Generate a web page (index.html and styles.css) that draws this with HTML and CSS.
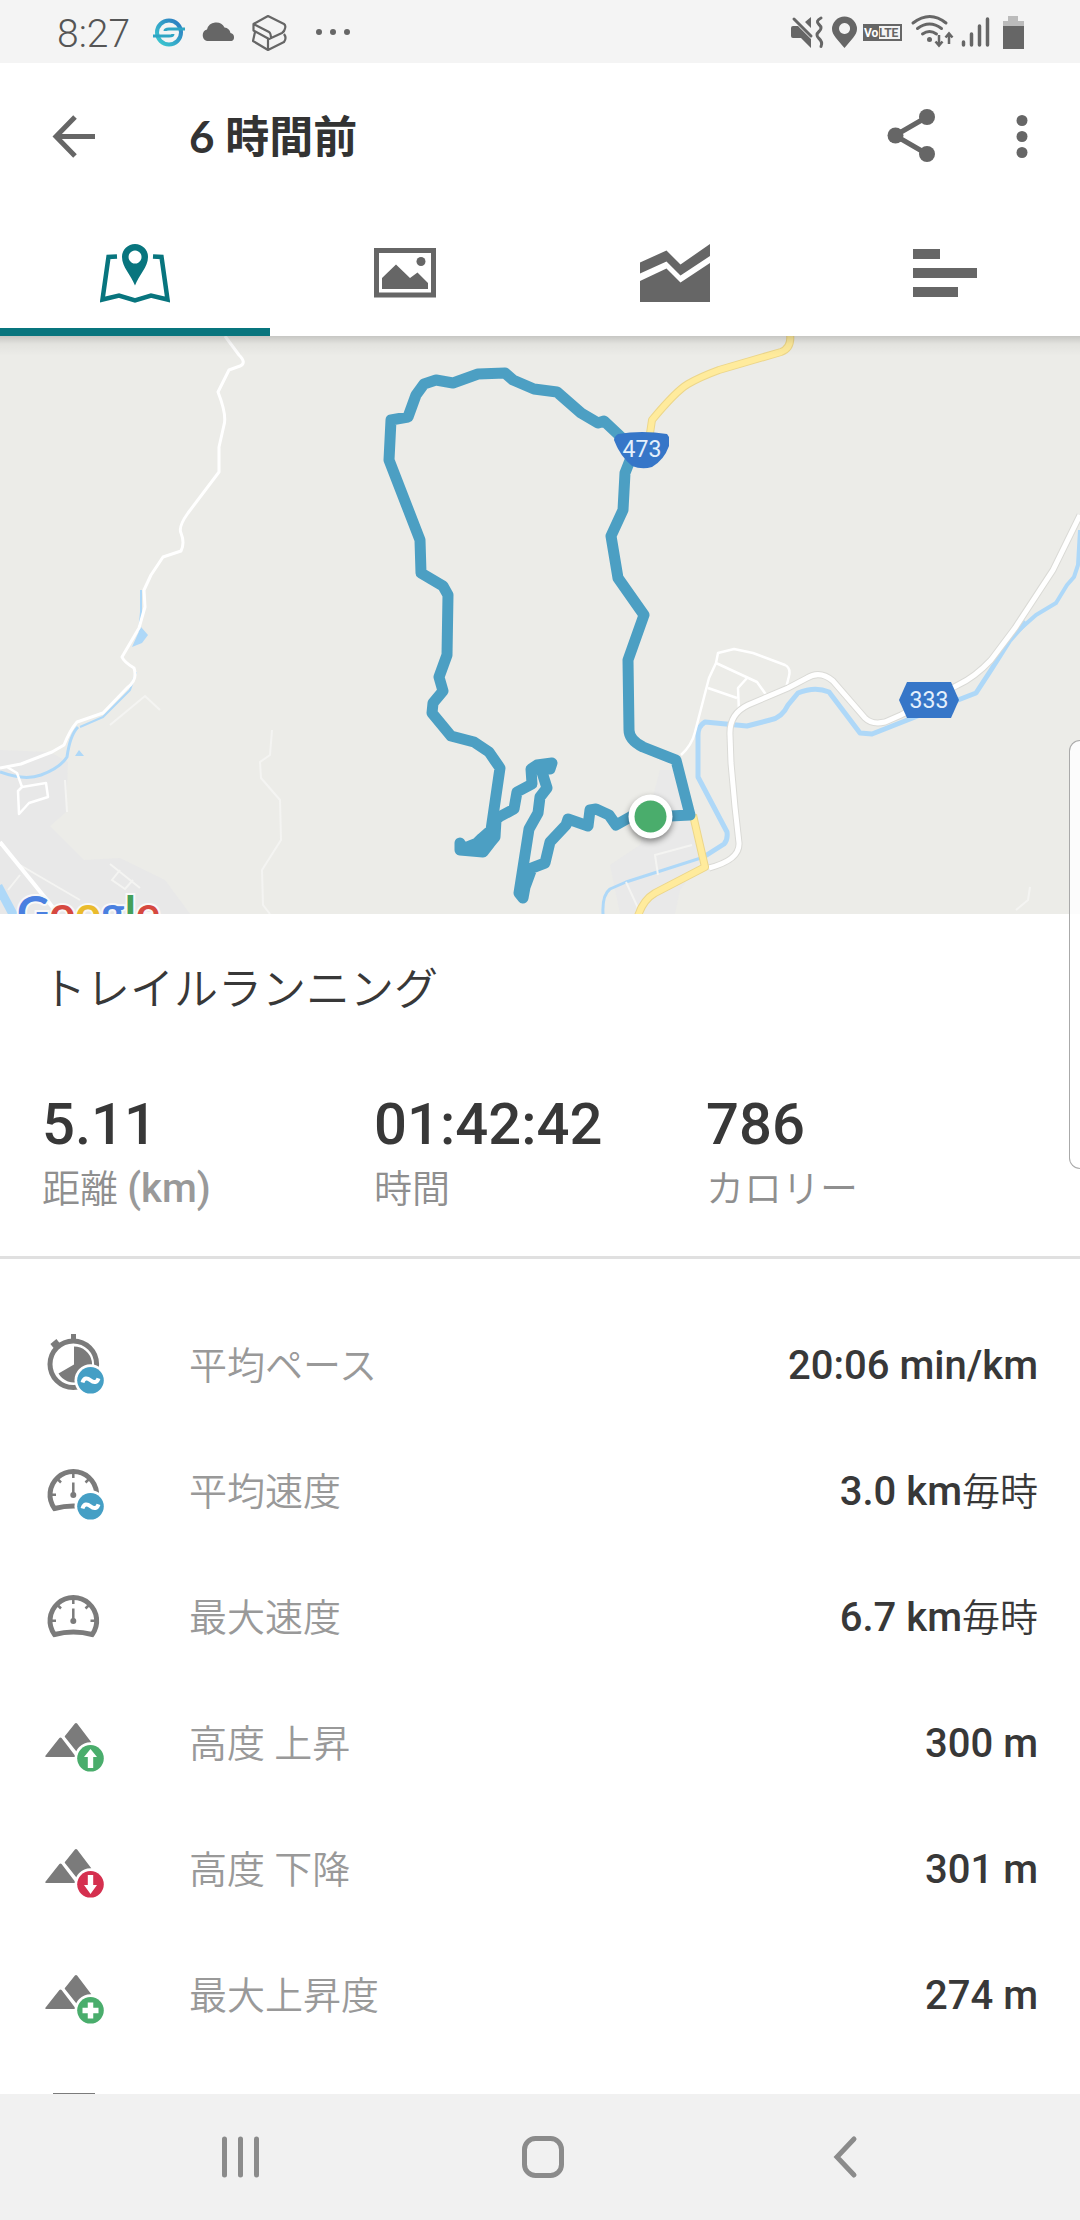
FILE: index.html
```
<!DOCTYPE html>
<html lang="ja">

<head>
    <meta charset="UTF-8">
    <meta name="viewport" content="width=device-width, initial-scale=1">
    <title>トレイルランニング</title>
    <link rel="stylesheet" href="styles.css">
</head>

<body>

    <!-- shared icons -->
    <svg class="sprite" width="0" height="0" aria-hidden="true">
        <symbol id="gauge" viewBox="42 -40 64 80">
            <path d="M54.500 16.500A23.300 23.300 0 1 1 92.200 16.500Q73.300 11.500 54.500 16.500Z" fill="none" stroke="#7b7b7b" stroke-width="5" />
            <path d="M73.300-19v5M51 2.800h5M90.500 2.800h5M57.500-13l3.500 3.500M89-13l-3.500 3.500M73.300-9.500v12" fill="none" stroke="#7b7b7b" stroke-width="2.500" />
            <circle cx="73.300" cy="3" r="3" fill="#7b7b7b" />
        </symbol>
        <symbol id="average" viewBox="42 -40 64 80">
            <circle cx="90.500" cy="14.300" r="16" fill="#fff" />
            <circle cx="90.500" cy="14.300" r="13.300" fill="#459fc5" />
            <path d="M82.500 16.500c1.500-5 4.500-5 8-2.200s6.500 2.400 8-2" fill="none" stroke="#fff" stroke-width="4" />
        </symbol>
        <symbol id="mountain" viewBox="42 -40 64 80">
            <path d="M46 12.300L60-5.500q.5-.6 1 0L74.500 12.300Z M65.500-7.500L75.500-20q.5-.6 1 0L90.500-1.500L79 9.500Z" fill="#7b7b7b" stroke="#7b7b7b" stroke-width="1.500" stroke-linejoin="round" />
            <circle cx="90.500" cy="14.300" r="16" fill="#fff" />
        </symbol>
    </svg>

    <div class="status-bar">
        <span class="clock">8:27</span>
        <svg class="status-left" viewBox="150 0 202 63" width="202" height="63" aria-hidden="true">
            <defs>
                <linearGradient id="syncColor" x1="0" y1="1" x2="1" y2="0">
                    <stop offset="0" stop-color="#3ccbd0" />
                    <stop offset="1" stop-color="#2b78c0" />
                </linearGradient>
            </defs>
            <circle cx="168" cy="32.500" r="12" fill="none" stroke="url(#syncColor)" stroke-width="4" />
            <path d="M184 29h-16q-4 0-4 2M152 36h16q4 0 4-2" fill="none" stroke="#2fa5c4" stroke-width="3" />
            <path d="M206 41a6 6 0 0 1 0-11.500a9.500 9.500 0 0 1 17.500-2a7 7 0 0 1 6 5.500a4.200 4.200 0 0 1 1 8Z" fill="#666" />
            <path d="M252.500 24L267 16L283 24q2 1.500 1 4.500q-.5 3-3 4.500L268 39L252.500 30.500ZM252.500 24L268 32q2 1 2 7M254 32l-2 9L267 50L283 42q3-4 0-8M267 39V50" fill="none" stroke="#666" stroke-width="2.200" stroke-linejoin="round" />
            <circle cx="318" cy="32" r="3" fill="#666" />
            <circle cx="332" cy="32" r="3" fill="#666" />
            <circle cx="346" cy="32" r="3" fill="#666" />
        </svg>
        <svg class="status-right" viewBox="788 0 236 63" width="236" height="63" aria-hidden="true">
            <g fill="#666">
                <path d="M792 26h5l13 13v9L800 38h-8q-2 0-2-2v-8q0-2 2-2ZM804 22l6-5v11Z" />
                <path d="M793 19l17 17M820 18q-6 3-2 6.500t0 7t0 7t2 8" fill="none" stroke="#666" stroke-width="3" stroke-linecap="round" />
                <path fill-rule="evenodd" d="M843.500 48C837 40 831 35 831 29a12.500 12.500 0 0 1 25 0C856 35 850 40 843.500 48ZM843.500 23a5.500 5.500 0 1 0 .1 0Z" />
                <path d="M862 24h39v17h-39ZM878 26v13h21V26Z" fill-rule="evenodd" />
                <text class="volte" x="863" y="37" fill="#fff">Vo</text>
                <text class="volte" x="878" y="37">LTE</text>
                <path d="M912 23q17-13 33 0M916.500 28.500q12-9 24 0M921.500 34q7-5 14 0" fill="none" stroke="#666" stroke-width="3" stroke-linecap="round" />
                <circle cx="928.500" cy="39.500" r="2.500" />
                <path d="M938 35v10M934.500 41.500l3.500 4l3.500-4M948 44V34M944.500 37.500l3.500-4l3.500 4" fill="none" stroke="#666" stroke-width="2.500" />
                <path d="M962.500 42v3M970.500 34v11M978.500 26v19M986.500 19v26" fill="none" stroke="#666" stroke-width="3.500" stroke-linecap="round" />
                <path d="M1002 21h5v-5h10v5h6v6h-21Z" fill="#bbb" />
                <path d="M1002 26h21v23h-21Z" />
            </g>
        </svg>
    </div>

    <header class="app-header">
        <button class="icon-button" type="button" aria-label="戻る">
            <svg viewBox="50 112 48 48" width="48" height="48">
                <path d="M75 117L56 136.500L75 156M57 136.500H95" fill="none" stroke="#666" stroke-width="5" />
            </svg>
        </button>
        <h1>6 時間前</h1>
        <button class="icon-button share" type="button" aria-label="共有">
            <svg viewBox="886 106 52 60" width="52" height="60">
                <path d="M927 117L895 135.500L927 154" fill="none" stroke="#666" stroke-width="5" />
                <circle cx="927" cy="117" r="8" fill="#666" />
                <circle cx="895.500" cy="135.500" r="8" fill="#666" />
                <circle cx="927" cy="154" r="8" fill="#666" />
            </svg>
        </button>
        <button class="icon-button" type="button" aria-label="メニュー">
            <svg viewBox="1014 112 16 48" width="16" height="48">
                <circle cx="1022" cy="120.500" r="5.500" fill="#666" />
                <circle cx="1022" cy="136.500" r="5.500" fill="#666" />
                <circle cx="1022" cy="152.500" r="5.500" fill="#666" />
            </svg>
        </button>
    </header>

    <nav class="tabs">
        <a href="#map" class="active" aria-label="マップ">
            <svg viewBox="100 242 70 62" width="70" height="62">
                <path d="M117 256.500l-8.500.5L102.500 299.500L119 295.500L135 300.500L151 295.500L167.500 299.500L161.500 257l-8.500-.5" fill="none" stroke="#08757e" stroke-width="4.500" />
                <path fill-rule="evenodd" d="M135 285.500C131 275 122 267 122 257a13 13 0 0 1 26 0C148 267 139 275 135 285.500ZM135 250.500a6.500 6.500 0 1 0 .1 0Z" fill="#08757e" />
            </svg>
        </a>
        <a href="#photos" aria-label="写真">
            <svg viewBox="374 242 62 62" width="62" height="62">
                <path d="M376.500 250.500h57v44.500h-57Z" fill="none" stroke="#666" stroke-width="5" />
                <path d="M382 289V278L396 264.500L410 278L417.500 272.500L428 283v6Z" fill="#666" />
                <circle cx="421" cy="261.500" r="4.500" fill="#666" />
            </svg>
        </a>
        <a href="#charts" aria-label="グラフ">
            <svg viewBox="640 242 70 62" width="70" height="62">
                <path d="M640 262.500L666.500 250.500L680.500 264.500L710 244V256L680.500 275.500L666.500 261.500L640 273.500ZM640 281L666.500 268.500L680.500 282.500L710 263V302H640Z" fill="#666" />
            </svg>
        </a>
        <a href="#details" aria-label="詳細">
            <svg viewBox="913 242 64 62" width="64" height="62">
                <path d="M913 249h27v10h-27ZM913 268h64v10h-64ZM913 287h45v10h-45Z" fill="#666" />
            </svg>
        </a>
    </nav>

    <main>
        <div class="map" id="map">
            <svg viewBox="0 336 1080 578" role="img" aria-label="ルートマップ">
                <defs>
                    <linearGradient id="topShade" x1="0" y1="0" x2="0" y2="1">
                        <stop offset="0" stop-color="#000" stop-opacity=".16" />
                        <stop offset=".4" stop-color="#000" stop-opacity=".04" />
                        <stop offset="1" stop-color="#000" stop-opacity="0" />
                    </linearGradient>
                </defs>
                <rect y="336" width="1080" height="578" fill="#ecece8" />

                <!-- built-up areas -->
                <path d="M0 750L50 752L68 762L66 812L50 826L84 860L120 858L165 880L190 914H0Z" fill="#e8e8e8" />
                <path d="M610 865L640 845L660 770L675 770L690 820L700 862L680 890L675 914H620Z" fill="#e9e9e9" />

                <!-- water -->
                <g fill="none" stroke="#aed8f8" stroke-linejoin="round">
                    <path d="M1080 530L1078 565L1074 577L1067 585L1056 603L1036 615L1019 630" stroke-width="4" />
                    <path d="M1026 622L1010 640L991 670L976 693L958 700L872 734L860 733L829 692Q815 686 798 693L788 705Q782 718 770 720L747 726L705 722Q698 726 698 735V777L727 832Q728 840 724 844L702 858" stroke-width="5" />
                    <path d="M704 857L626 882L610 889Q602 895 603 914" stroke-width="3" />
                    <path d="M78 727Q70 735 67 757Q60 768 41 775Q25 781 0 772" stroke-width="3" />
                    <path d="M141 590V612L139 632M136 672L130 690L103 717L80 727" stroke-width="2" />
                    <path d="M-2 886L14 916" stroke-width="9" />
                </g>
                <path d="M141 627L148 635L142 643L132 647ZM79 750L84 756L75 756Z" fill="#aed8f8" />

                <!-- minor roads -->
                <g fill="none" stroke="#f4f4f2" stroke-width="2">
                    <path d="M272 730L270 755L260 762L261 778L280 800L281 840L262 870L263 905L270 914M110 725L145 696L160 710M65 780L67 812M8 890L20 875M20 865L80 900M692 845L655 855L658 875M626 882L638 908M1030 887L1028 900L1016 910" />
                    <path d="M110 864L140 888M120 870L112 880L125 889L133 880" />
                </g>
                <g fill="none" stroke="#fff" stroke-width="2.500" stroke-linejoin="round">
                    <path d="M681 755Q692 745 695 732L709 678L716 663L718 653L734 649L753 653L785 665Q791 668 789 676L786 688M716 663L757 682L767 696M747 678L738 688L739 712M708 688L737 698" />
                    <path d="M7 767L17 773L22 787L46 783L48 797L29 803L19 814L18 791L22 787" />
                    <path d="M225 336L239 355Q247 363 240 366L229 370L218 392Q227 415 224 425L219 447V472L188 513Q178 527 181 533Q185 543 181 551L163 557L151 575L144 590L145 607L139 628L122 657Q124 662 134 668Q138 680 127 688L103 713L77 722Q70 730 64 745L52 752L21 764L0 768" stroke-width="3" />
                </g>
                <path d="M0 842L55 910" fill="none" stroke="#fff" stroke-width="4" />

                <!-- route 333 -->
                <path d="M1080 515L1053 570L1015 628L991 660Q975 677 958 685L901 715L885 722Q872 725 865 718L833 681Q820 670 807 678L788 688L748 705Q729 714 730 735L731 763L735 807L739 843Q740 860 709 868" fill="none" stroke="#dadad6" stroke-width="7" />
                <path d="M1080 515L1053 570L1015 628L991 660Q975 677 958 685L901 715L885 722Q872 725 865 718L833 681Q820 670 807 678L788 688L748 705Q729 714 730 735L731 763L735 807L739 843Q740 860 709 868" fill="none" stroke="#fff" stroke-width="5" />

                <!-- route 473 -->
                <g fill="none" stroke-linejoin="round">
                    <path d="M790 334Q792 348 781 352L719 370Q700 377 688 384Q676 391 652 420L649 440M693 815L705 867L655 893Q643 900 638 916" stroke="#ecd68a" stroke-width="8" />
                    <path d="M790 334Q792 348 781 352L719 370Q700 377 688 384Q676 391 652 420L649 440M693 815L705 867L655 893Q643 900 638 916" stroke="#ffeb9c" stroke-width="6" />
                </g>

                <!-- recorded track -->
                <path d="M650 817L690 815L676 760L643 747Q629 740 629 730L628 660L644 615L618 578L611 536L623 510L625 473L636 445L621 437L604 421L598 423L581 413L557 392L534 389L513 380L505 373L478 374L453 383L436 380L424 384L416 395L408 417L391 420L389 460L420 540L421 573L443 586L448 595L447 655L439 677L443 691L433 703L432 713L451 736L474 742L489 752L500 768L491 830L482 838L477 843L467 847L462 848L460 843L460 850L483 852L490 843L495 837L496 820L499 817L514 809L517 792L532 784L531 769L537 765L552 763L550 769L541 769L547 788L540 797L538 813L529 829L519 893L523 898L525 887L532 868L545 863L550 842L566 825L568 819L588 826L590 810L596 809L609 815L616 825L632 816" fill="none" stroke="#4c9fc3" stroke-width="11" stroke-linejoin="round" stroke-linecap="round" />

                <path d="M618 434Q642 430 667 434L669 437V446Q664 460 652 467Q642 470 632 466Q620 456 614 440Q614 437 618 434Z" fill="#3676c8" />
                <text class="road-number" x="642" y="457">473</text>
                <path d="M899 700L907 682H951L959 700L951 718H907Z" fill="#3676c8" />
                <text class="road-number" x="929" y="708">333</text>

                <circle class="start-pin" cx="650.500" cy="816.500" r="22" fill="#fff" />
                <circle cx="650.500" cy="816.500" r="16" fill="#4aad6c" />

                <text class="map-brand" x="17" y="929"><tspan fill="#4a80e0">G</tspan><tspan fill="#d6483f">o</tspan><tspan fill="#eabb2c">o</tspan><tspan fill="#4a80e0">g</tspan><tspan fill="#43a05a">l</tspan><tspan fill="#d6483f">e</tspan></text>
                <rect y="336" width="1080" height="20" fill="url(#topShade)" />
            </svg>
        </div>

        <section class="summary">
            <h2>トレイルランニング</h2>
            <div class="stats">
                <div class="stat">
                    <strong>5.11</strong>
                    <span>距離 <b class="unit">(km)</b></span>
                </div>
                <div class="stat">
                    <strong>01:42:42</strong>
                    <span>時間</span>
                </div>
                <div class="stat">
                    <strong>786</strong>
                    <span>カロリー</span>
                </div>
            </div>
        </section>

        <ul class="details" id="details">
            <li>
                <svg viewBox="42 -40 64 80">
                    <circle cx="73.300" cy="-1.700" r="23.300" fill="none" stroke="#7b7b7b" stroke-width="5" />
                    <path d="M73.500-32v7M52-20l6-5" stroke="#7b7b7b" stroke-width="5" />
                    <path d="M74-1.500V-19.500A18 18 0 1 1 58.500 7.500Z" fill="#7b7b7b" />
                    <use href="#average" x="42" y="-40" width="64" height="80" />
                </svg>
                <span class="label">平均ペース</span>
                <span class="value">20:06 min/km</span>
            </li>
            <li>
                <svg viewBox="42 -40 64 80">
                    <use href="#gauge" x="42" y="-40" width="64" height="80" />
                    <use href="#average" x="42" y="-40" width="64" height="80" />
                </svg>
                <span class="label">平均速度</span>
                <span class="value">3.0 km<span class="per-hour">毎時</span></span>
            </li>
            <li>
                <svg viewBox="42 -40 64 80">
                    <use href="#gauge" x="42" y="-40" width="64" height="80" />
                </svg>
                <span class="label">最大速度</span>
                <span class="value">6.7 km<span class="per-hour">毎時</span></span>
            </li>
            <li>
                <svg viewBox="42 -40 64 80">
                    <use href="#mountain" x="42" y="-40" width="64" height="80" />
                    <circle cx="90.500" cy="14.300" r="13.300" fill="#4aad6c" />
                    <path d="M90.500 5L97 13H93.200V24H87.800V13H84Z" fill="#fff" />
                </svg>
                <span class="label">高度 上昇</span>
                <span class="value">300 m</span>
            </li>
            <li>
                <svg viewBox="42 -40 64 80">
                    <use href="#mountain" x="42" y="-40" width="64" height="80" />
                    <circle cx="90.500" cy="14.300" r="13.300" fill="#d5304f" />
                    <path d="M90.500 24L97 15H93.200V5H87.800V15H84Z" fill="#fff" />
                </svg>
                <span class="label">高度 下降</span>
                <span class="value">301 m</span>
            </li>
            <li>
                <svg viewBox="42 -40 64 80">
                    <use href="#mountain" x="42" y="-40" width="64" height="80" />
                    <circle cx="90.500" cy="14.300" r="13.300" fill="#4aad6c" />
                    <path d="M90.500 6.500V22.500M82.500 14.500H98.500" stroke="#fff" stroke-width="5.500" />
                </svg>
                <span class="label">最大上昇度</span>
                <span class="value">274 m</span>
            </li>
            <li>
                <svg viewBox="42 -40 64 80">
                    <path d="M53-29H95V20H53Z" fill="#7b7b7b" />
                </svg>
            </li>
        </ul>
    </main>

    <div class="edge-handle"></div>

    <footer class="system-nav">
        <button type="button" aria-label="履歴">
            <svg viewBox="0 0 42 44" width="42" height="44">
                <path d="M4.500 4v36M20.500 4v36M36.500 4v36" stroke="#8b8b8b" stroke-width="5" stroke-linecap="round" />
            </svg>
        </button>
        <button type="button" aria-label="ホーム">
            <svg viewBox="0 0 44 44" width="44" height="44">
                <rect x="3.500" y="3.500" width="37" height="37" rx="11" fill="none" stroke="#8b8b8b" stroke-width="5" />
            </svg>
        </button>
        <button type="button" aria-label="戻る">
            <svg viewBox="0 0 26 44" width="26" height="44">
                <path d="M22 4L5 22L22 40" fill="none" stroke="#8b8b8b" stroke-width="5" stroke-linecap="round" />
            </svg>
        </button>
    </footer>

</body>

</html>
```
FILE: styles.css
```
* {
    box-sizing: border-box;
}

body {
    display: flex;
    flex-direction: column;
    position: relative;
    height: 100vh;
    margin: 0;
    overflow: hidden;
    background: #fff;
    color: #383838;
    font-family: Roboto, "Noto Sans CJK JP", sans-serif;
}

svg {
    display: block;
}

.sprite {
    position: absolute;
}

button {
    padding: 0;
    border: none;
    background: none;
    cursor: pointer;
}

/* status bar */
.status-bar {
    display: flex;
    align-items: center;
    flex: none;
    height: 63px;
    padding: 0 55px 0 57px;
    background: #f4f4f4;
}

.clock {
    width: 94px;
    padding-top: 4px;
    font-size: 39px;
    font-weight: 350;
    line-height: 44px;
    color: #555;
}

.status-right {
    margin-left: auto;
}

.volte {
    font-size: 12px;
    font-weight: 700;
}

/* header */
.app-header {
    display: flex;
    align-items: center;
    flex: none;
    height: 146px;
    padding: 0 50px;
}

.app-header h1 {
    flex: 1;
    margin: 0 0 0 91px;
    font-family: Lato, "Noto Sans CJK JP", sans-serif;
    font-size: 44px;
    font-weight: 700;
    line-height: 60px;
    color: #333;
}

.share {
    margin-right: 76px;
}

/* tabs */
.tabs {
    display: grid;
    grid-template-columns: repeat(4, 1fr);
    flex: none;
    height: 127px;
}

.tabs a {
    display: flex;
    align-items: center;
    justify-content: center;
    border-top: 8px solid transparent;
    border-bottom: 8px solid transparent;
}

.tabs a.active {
    border-bottom-color: #08757e;
}

main {
    flex: 1;
    min-height: 0;
    overflow: hidden;
}

/* map */
.map svg {
    width: 100%;
    height: auto;
}

.road-number {
    font-size: 23px;
    text-anchor: middle;
    fill: #e4f0fc;
}

.start-pin {
    filter: drop-shadow(0 3px 3px rgba(0, 0, 0, 0.45));
}

.map-brand {
    font-family: Lato, sans-serif;
    font-size: 45px;
    font-weight: 700;
    stroke: #f8f8f8;
    stroke-width: 4px;
    paint-order: stroke;
}

/* activity summary */
.summary {
    padding: 46px 42px 40px;
    border-bottom: 3px solid #e0e0e0;
}

.summary h2 {
    margin: 0 0 66px;
    font-size: 44px;
    font-weight: 350;
    line-height: 60px;
}

.stats {
    display: grid;
    grid-template-columns: repeat(3, 1fr);
}

.stat strong,
.stat span {
    display: block;
}

.stat strong {
    font-size: 58px;
    font-weight: 500;
    line-height: 76px;
}

.stat span {
    font-size: 38px;
    font-weight: 350;
    line-height: 54px;
    color: #8f8f8f;
}

.stat .unit {
    font-size: 40px;
    font-weight: 500;
    color: #999;
}

/* detail rows */
.details {
    margin: 0;
    padding: 44px 42px 0;
    list-style: none;
}

.details li {
    display: grid;
    grid-template-columns: 147px 1fr auto;
    align-items: center;
    height: 126px;
    line-height: 48px;
}

.details svg {
    width: 64px;
    height: 80px;
}

.label {
    font-size: 38px;
    font-weight: 350;
    color: #999;
}

.value {
    font-size: 40px;
    font-weight: 500;
}

.per-hour {
    font-size: 38px;
    font-weight: 350;
}

/* edge panel handle */
.edge-handle {
    position: absolute;
    top: 740px;
    right: 0;
    width: 11px;
    height: 429px;
    background: rgba(255, 255, 255, 0.85);
    border: 1px solid #aaa;
    border-right: none;
    border-radius: 14px 0 0 14px;
}

/* system navigation */
.system-nav {
    display: grid;
    grid-template-columns: repeat(3, 1fr);
    flex: none;
    height: 126px;
    padding: 0 84px 0 90px;
    background: #f1f1f1;
}

.system-nav button {
    display: flex;
    align-items: center;
    justify-content: center;
}
```
